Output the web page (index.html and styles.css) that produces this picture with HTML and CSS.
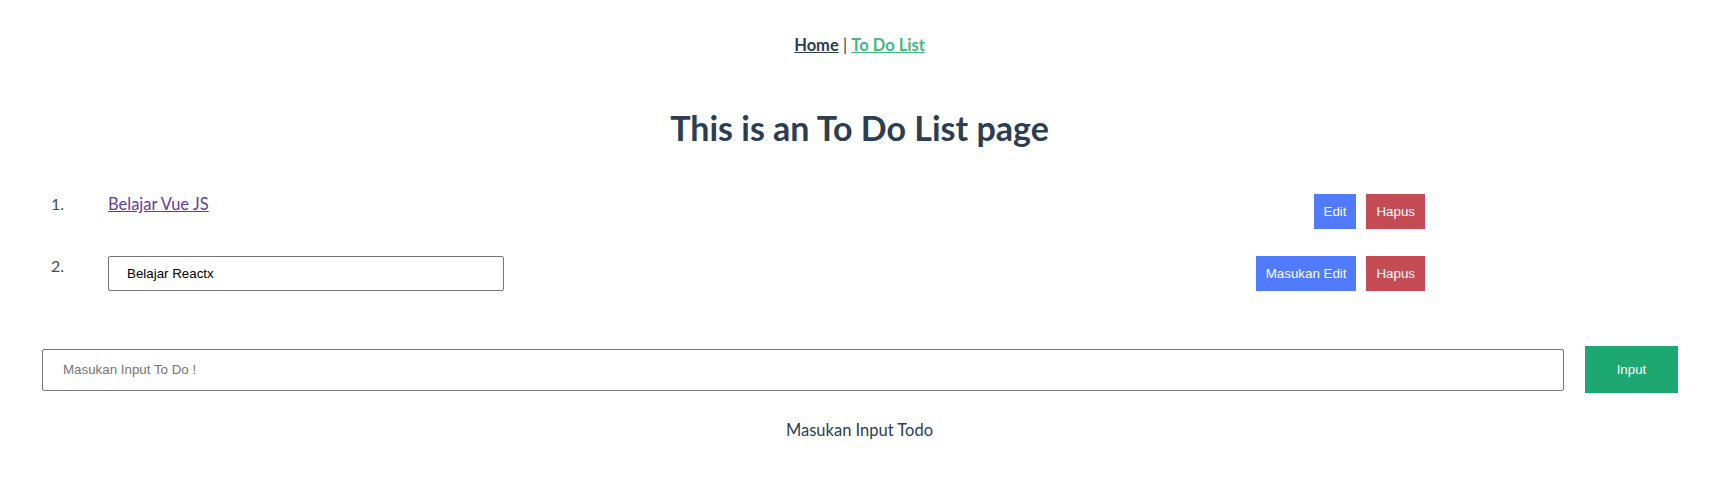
FILE: index.html
```html
<!DOCTYPE html>
<html lang="id">
<head>
<meta charset="utf-8">
<title>To Do List</title>
<link rel="stylesheet" href="styles.css">
</head>
<body>
<div class="app">
  <nav class="nav">
    <a href="#" class="nav-link">Home</a> | <a href="#" class="nav-link active">To Do List</a>
  </nav>
  <h1 class="title">This is an To Do List page</h1>
  <ol class="todo-list">
    <li class="todo-item">
      <span class="num">1.</span>
      <div class="content"><a href="#" class="todo-link">Belajar Vue JS</a></div>
      <div class="actions">
        <button class="btn btn-blue">Edit</button>
        <button class="btn btn-red">Hapus</button>
      </div>
    </li>
    <li class="todo-item">
      <span class="num">2.</span>
      <div class="content"><input class="edit-input" type="text" value="Belajar Reactx"></div>
      <div class="actions">
        <button class="btn btn-blue">Masukan Edit</button>
        <button class="btn btn-red">Hapus</button>
      </div>
    </li>
  </ol>
  <div class="form-row">
    <input class="main-input" type="text" placeholder="Masukan Input To Do !">
    <button class="btn-green">Input</button>
  </div>
  <p class="hint">Masukan Input Todo</p>
</div>
</body>
</html>
```

FILE: styles.css
```css
html, body {
  margin: 0;
  padding: 0;
  background: #ffffff;
}

.app {
  font-family: "Lato", "Noto Sans", sans-serif;
  color: #2c3e50;
  -webkit-font-smoothing: antialiased;
  text-align: center;
  padding: 0 8px;
}

.nav {
  padding: 35px 7px 0 0;
  font-size: 16.5px;
  line-height: 20px;
  font-weight: 400;
  color: #2c3e50;
}

.nav-link {
  color: #2c3e50;
  font-weight: 700;
}

.nav-link.active {
  color: #42b983;
}

.title {
  margin: 53px 0 0;
  padding-right: 7px;
  font-size: 34px;
  line-height: 40px;
  font-weight: 700;
}

.todo-list {
  list-style: none;
  margin: 46px 0 0;
  padding: 0 293px 0 43px;
  display: flex;
  flex-direction: column;
  gap: 27px;
  text-align: left;
}

.todo-item {
  display: grid;
  grid-template-columns: 57px 1fr auto;
  align-items: start;
}

.num {
  font-size: 16px;
  line-height: 20px;
  color: #3d4e5f;
}

.content {
  font-size: 16.5px;
  line-height: 20px;
}

.todo-link {
  color: #653a9e;
}

.edit-input {
  box-sizing: border-box;
  width: 396px;
  height: 35px;
  margin-top: 0;
  padding: 0 18px;
  border: 1px solid #767676;
  border-radius: 2px;
  font-family: "Liberation Sans", Arial, sans-serif;
  font-size: 13.33px;
  color: #000;
}

.actions {
  display: flex;
  gap: 10px;
}

.btn {
  height: 35px;
  padding: 0 10px;
  border: none;
  border-radius: 0;
  color: #ffffff;
  font-family: "Liberation Sans", Arial, sans-serif;
  font-size: 13.33px;
}

.btn-blue {
  background: #507bff;
}

.btn-red {
  background: #c54c54;
}

.form-row {
  display: flex;
  align-items: center;
  gap: 21px;
  margin-top: 55px;
  padding: 0 40px 0 34px;
}

.main-input {
  flex: 1;
  box-sizing: border-box;
  height: 42px;
  padding: 0 20px;
  border: 1px solid #767676;
  border-radius: 2px;
  font-family: "Liberation Sans", Arial, sans-serif;
  font-size: 13.33px;
  color: #000;
}

.main-input::placeholder {
  color: #757575;
}

.btn-green {
  width: 93px;
  height: 47px;
  border: none;
  border-radius: 0;
  background: #1da771;
  color: #ffffff;
  font-family: "Liberation Sans", Arial, sans-serif;
  font-size: 13.33px;
}

.hint {
  margin: 27px 0 0;
  padding-right: 7px;
  font-size: 16.5px;
  line-height: 20px;
}
```
